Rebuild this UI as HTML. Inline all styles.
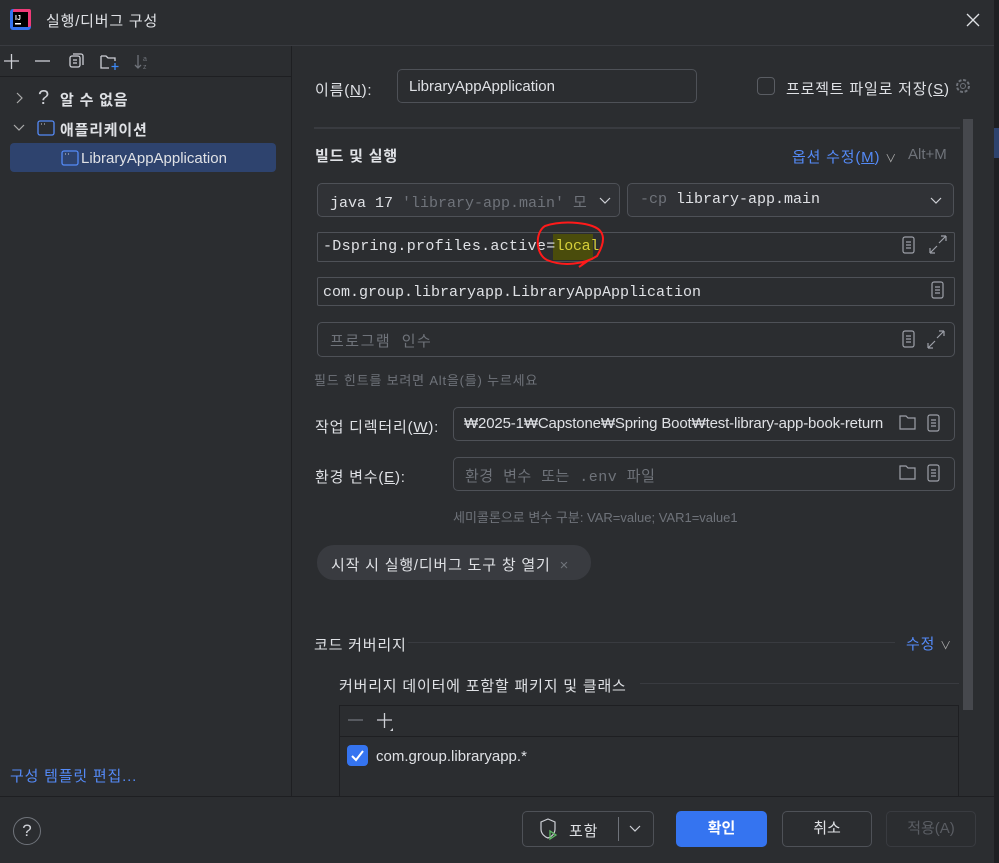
<!DOCTYPE html>
<html><head><meta charset="utf-8"><style>
*{box-sizing:border-box;margin:0;padding:0}
body{width:999px;height:863px;background:#2b2d30;color:#dfe1e5;font-family:"Liberation Sans","Noto Sans CJK KR",sans-serif;font-size:15px;position:relative;overflow:hidden}
.a{position:absolute;white-space:nowrap}
.k{letter-spacing:0.8px}
.mono{font-family:"Liberation Mono","Noto Sans CJK KR",monospace}
.f{position:absolute;border:1px solid #4e5157;border-radius:4px;background:#2b2d30}
.dim{color:#6f737a}
.blue{color:#548af7}
u{text-decoration:underline}
</style></head><body>
<div class="a" style="left:994px;top:0;width:5px;height:863px;background:#1e1f22"></div>
<div class="a" style="left:994px;top:128px;width:5px;height:30px;background:#2e436e"></div>
<!-- title -->
<svg class="a" style="left:10px;top:9px" width="21" height="21"><rect x="0" y="0" width="21" height="21" rx="3" fill="#3574f0"/><rect x="3" y="0" width="18" height="18" rx="2" fill="#f03b78"/><rect x="3" y="3" width="15" height="15" fill="#000"/><text x="5" y="11" fill="#fff" font-size="7" font-family="Liberation Sans" font-weight="bold">IJ</text><rect x="5" y="14" width="6" height="1.5" fill="#fff"/></svg>
<div class="a k" style="left:46px;top:10px;font-size:15px">실행/디버그 구성</div>
<svg class="a" style="left:966px;top:13px" width="14" height="14"><path d="M1 1L13 13M13 1L1 13" stroke="#dfe1e5" stroke-width="1.3"/></svg>
<div class="a" style="left:0;top:45px;width:994px;height:1px;background:#393b40"></div>
<!-- left panel -->
<div class="a" style="left:291px;top:46px;width:1px;height:750px;background:#1e1f22"></div>
<div class="a" style="left:0;top:76px;width:291px;height:1px;background:#1e1f22"></div>
<svg class="a" style="left:2px;top:52px" width="150" height="20" fill="none" stroke="#ced0d6" stroke-width="1.3">
<path d="M2 9H17M9.5 2V17"/><path d="M33 9H48"/>
<rect x="68" y="4" width="10" height="11" rx="2"/><path d="M71 2h8a2 2 0 0 1 2 2v9M71 8h4M71 11h4"/>
<path d="M99 4h5l2 2h7v3M99 4v12h8"/><path d="M113 11v7M109.5 14.5h7" stroke="#3d8af7"/>
<path d="M136 3v13M133 13l3 3 3-3" stroke="#6f737a"/><text x="141" y="9" font-size="7" fill="#6f737a" stroke="none">a</text><text x="141" y="17" font-size="7" fill="#6f737a" stroke="none">z</text>
</svg>
<svg class="a" style="left:14px;top:92px" width="12" height="12"><path d="M3 1l5 5-5 5" stroke="#aaa" fill="none" stroke-width="1.2"/></svg>
<div class="a" style="left:38px;top:87px;font-size:20px;color:#ced0d6">?</div>
<div class="a k" style="left:60px;top:89px;font-weight:bold;font-size:15px">알 수 없음</div>
<svg class="a" style="left:13px;top:122px" width="12" height="12"><path d="M1 3l5 5 5-5" stroke="#aaa" fill="none" stroke-width="1.2"/></svg>
<svg class="a" style="left:37px;top:120px" width="18" height="16"><rect x="1" y="1" width="16" height="14" rx="2" fill="none" stroke="#548af7" stroke-width="1.3"/><path d="M4 4h1M7 4h1" stroke="#ced0d6"/></svg>
<div class="a k" style="left:60px;top:119px;font-weight:bold;font-size:15px">애플리케이션</div>
<div class="a" style="left:10px;top:143px;width:266px;height:29px;background:#2e436e;border-radius:4px"></div>
<svg class="a" style="left:61px;top:150px" width="18" height="16"><rect x="1" y="1" width="16" height="14" rx="2" fill="none" stroke="#548af7" stroke-width="1.3"/><path d="M4 4h1M7 4h1" stroke="#ced0d6"/></svg>
<div class="a" style="left:81px;top:150px;font-size:15px">LibraryAppApplication</div>
<div class="a blue k" style="left:10px;top:765px;font-size:15px">구성 템플릿 편집...</div>
<!-- right -->
<div class="a k" style="left:315px;top:79px">이름(<u>N</u>):</div>
<div class="f" style="left:397px;top:69px;width:300px;height:34px;border-radius:5px"></div>
<div class="a" style="left:409px;top:78px;font-size:15px">LibraryAppApplication</div>
<div class="a" style="left:757px;top:77px;width:18px;height:18px;border:1px solid #5a5d63;border-radius:4px"></div>
<div class="a k" style="left:786px;top:78px">프로젝트 파일로 저장(<u>S</u>)</div>
<svg class="a" style="left:954px;top:77px" width="18" height="18"><circle cx="9" cy="9" r="6" fill="none" stroke="#6f737a" stroke-width="2" stroke-dasharray="3 1.7"/><circle cx="9" cy="9" r="2.5" fill="none" stroke="#6f737a"/></svg>
<div class="a" style="left:314px;top:127px;width:646px;height:2px;background:#393b40"></div>
<div class="a" style="left:963px;top:119px;width:10px;height:591px;background:#46484d"></div>
<div class="a k" style="left:315px;top:145px;font-weight:bold;font-size:15px">빌드 및 실행</div>
<div class="a blue k" style="left:792px;top:146px">옵션 수정(<u>M</u>) <span style="color:#aaa;font-size:11px">∨</span></div>
<div class="a dim" style="left:908px;top:146px">Alt+M</div>
<div class="f" style="left:317px;top:183px;width:303px;height:34px;border-radius:5px;background:#303236"></div>
<div class="a mono" style="left:330px;top:191px;font-size:15px">java 17 <span class="dim">'library-app.main' 모</span></div>
<svg class="a" style="left:599px;top:196px" width="12" height="10"><path d="M1 2l5 5 5-5" stroke="#ced0d6" fill="none" stroke-width="1.2"/></svg>
<div class="f" style="left:627px;top:183px;width:327px;height:34px;border-radius:5px;background:#303236"></div>
<div class="a mono" style="left:640px;top:191px;font-size:15px"><span class="dim">-cp</span> library-app.main</div>
<svg class="a" style="left:930px;top:196px" width="12" height="10"><path d="M1 2l5 5 5-5" stroke="#ced0d6" fill="none" stroke-width="1.2"/></svg>

<div class="f" style="left:317px;top:232px;width:638px;height:30px;border-radius:2px"></div>
<div class="a" style="left:553px;top:234px;width:40px;height:26px;background:#4a4c0c"></div>
<div class="a mono" style="left:323px;top:238px;font-size:15px;letter-spacing:0.3px">-Dspring.profiles.active=<span style="color:#d6cf3a;letter-spacing:-0.3px">local</span></div>
<svg class="a" style="left:533px;top:220px" width="72" height="50"><path d="M68 12C62 2 30 0 12 6C2 12 2 34 14 40C30 47 52 44 64 36C70 26 72 18 68 12M56 40L46 47" stroke="#ff1a1a" stroke-width="2" fill="none"/></svg>
<div class="f" style="left:317px;top:277px;width:638px;height:29px;border-radius:2px"></div>
<div class="a mono" style="left:323px;top:284px;font-size:15px">com.group.libraryapp.LibraryAppApplication</div>
<div class="f" style="left:317px;top:322px;width:638px;height:35px;border-radius:5px"></div>
<div class="a dim mono k" style="left:330px;top:330px;font-size:15px;letter-spacing:1.5px">프로그램 인수</div>
<svg class="a" style="left:900px;top:232px" width="52" height="130" fill="none" stroke="#9da0a8" stroke-width="1.2">
<rect x="3" y="5" width="11" height="16" rx="2"/><path d="M6 10h5M6 13h5M6 16h5"/>
<path d="M30 21l7-7M46 4l-7 7M30 21v-5M30 21h5M46 4v5M46 4h-5"/>
<rect x="32" y="50" width="11" height="16" rx="2"/><path d="M35 55h5M35 58h5M35 61h5"/>
<rect x="3" y="99" width="11" height="16" rx="2"/><path d="M6 104h5M6 107h5M6 110h5"/>
<path d="M28 116l7-7M44 99l-7 7M28 116v-5M28 116h5M44 99v5M44 99h-5"/>
</svg>
<div class="a dim k" style="left:314px;top:370px;font-size:13px">필드 힌트를 보려면 Alt을(를) 누르세요</div>

<div class="a k" style="left:315px;top:416px">작업 디렉터리(<u>W</u>):</div>
<div class="f" style="left:453px;top:407px;width:502px;height:34px;border-radius:5px"></div>
<div class="a" style="left:464px;top:415px;font-size:15px;letter-spacing:-0.15px">₩2025-1₩Capstone₩Spring Boot₩test-library-app-book-return</div>
<div class="a k" style="left:315px;top:466px">환경 변수(<u>E</u>):</div>
<div class="f" style="left:453px;top:457px;width:502px;height:34px;border-radius:5px"></div>
<div class="a dim mono" style="left:465px;top:465px;font-size:15px;letter-spacing:0.5px">환경 변수 또는 .env 파일</div>
<svg class="a" style="left:898px;top:412px" width="50" height="75" fill="none" stroke="#9da0a8" stroke-width="1.2">
<path d="M2 4h6l2 2h7v11H2z"/><rect x="30" y="3" width="11" height="16" rx="2"/><path d="M33 8h5M33 11h5M33 14h5"/>
<path d="M2 54h6l2 2h7v11H2z"/><rect x="30" y="53" width="11" height="16" rx="2"/><path d="M33 58h5M33 61h5M33 64h5"/>
</svg>
<div class="a dim" style="left:453px;top:507px;font-size:13px">세미콜론으로 변수 구분: VAR=value; VAR1=value1</div>
<div class="a" style="left:317px;top:545px;width:274px;height:35px;background:#393b40;border-radius:17px"></div>
<div class="a k" style="left:331px;top:554px;font-size:15px">시작 시 실행/디버그 도구 창 열기 <span class="dim" style="margin-left:4px">×</span></div>

<div class="a k" style="left:314px;top:634px">코드 커버리지</div>
<div class="a" style="left:408px;top:642px;width:487px;height:1px;background:#393b40"></div>
<div class="a blue k" style="left:906px;top:633px">수정 <span style="color:#aaa;font-size:11px">∨</span></div>
<div class="a k" style="left:339px;top:675px">커버리지 데이터에 포함할 패키지 및 클래스</div>
<div class="a" style="left:640px;top:683px;width:319px;height:1px;background:#393b40"></div>
<div class="a" style="left:339px;top:705px;width:620px;height:92px;border:1px solid #1e1f22;border-bottom:none"></div>
<div class="a" style="left:339px;top:736px;width:620px;height:1px;background:#1e1f22"></div>
<svg class="a" style="left:345px;top:710px" width="60" height="24"><path d="M3 10h15" stroke="#6f737a" stroke-width="1.3"/><path d="M32 10h15M39.5 3v15" stroke="#ced0d6" stroke-width="1.3"/><path d="M45 21l3-3v3z" fill="#ced0d6"/></svg>
<div class="a" style="left:347px;top:745px;width:21px;height:21px;background:#3574f0;border-radius:4px"></div>
<svg class="a" style="left:347px;top:745px" width="21" height="21"><path d="M5 11l4 4 7-9" stroke="#fff" stroke-width="2" fill="none"/></svg>
<div class="a" style="left:376px;top:748px;font-size:15px">com.group.libraryapp.*</div>

<div class="a" style="left:0;top:796px;width:994px;height:1px;background:#1e1f22"></div>
<div class="a" style="left:13px;top:817px;width:28px;height:28px;border:1px solid #6f737a;border-radius:50%;text-align:center;line-height:26px;font-size:17px;color:#ced0d6">?</div>
<div class="a" style="left:522px;top:811px;width:132px;height:36px;border:1px solid #4e5157;border-radius:5px"></div>
<div class="a" style="left:618px;top:817px;width:1px;height:24px;background:#6f737a"></div>
<svg class="a" style="left:540px;top:817px" width="22" height="24"><path d="M8 2l7 3v7c0 5-4 8-7 9-3-1-7-4-7-9V5z" fill="none" stroke="#ced0d6" stroke-width="1.2"/><path d="M10 14l0 8 6-4z" fill="none" stroke="#5fb865" stroke-width="1.3"/></svg>
<div class="a k" style="left:569px;top:820px;font-size:15px">포함</div>
<svg class="a" style="left:629px;top:824px" width="12" height="10"><path d="M1 2l5 5 5-5" stroke="#ced0d6" fill="none" stroke-width="1.2"/></svg>
<div class="a" style="left:676px;top:811px;width:91px;height:36px;background:#3574f0;border-radius:5px;text-align:center;line-height:36px;font-weight:bold;font-size:15px;color:#fff">확인</div>
<div class="a" style="left:782px;top:811px;width:90px;height:36px;border:1px solid #4e5157;border-radius:5px;text-align:center;line-height:34px;font-size:15px">취소</div>
<div class="a" style="left:886px;top:811px;width:90px;height:36px;border:1px solid #393b40;border-radius:5px;text-align:center;line-height:34px;font-size:15px;color:#5a5d63">적용(A)</div>
</body></html>
